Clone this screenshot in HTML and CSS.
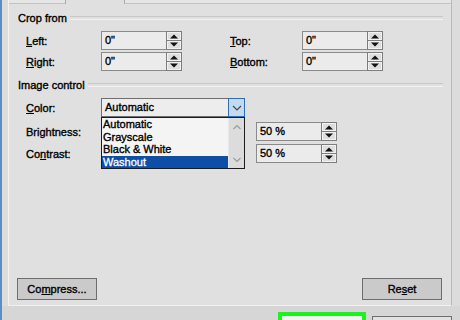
FILE: index.html
```html
<!DOCTYPE html>
<html>
<head>
<meta charset="utf-8">
<link rel="stylesheet" href="styles.css">
</head>
<body>
<div class="window">
  <div class="main">
    <div class="top">
      <div class="panel">
        <div class="tabs">
          <span class="tab-fill"></span>
          <span class="tab"></span>
          <span class="tab-fill grow"></span>
        </div>
        <div class="body">
          <div class="heading"><span>Crop from</span></div>
          <div class="row first">
            <span class="label"><u>L</u>eft:</span>
            <div class="spin"><span class="field">0"</span><svg class="arrows" width="16" height="19" viewBox="0 0 16 19"><rect x="0.5" y="0.5" width="15" height="18" fill="#cfcfcf" stroke="#7d7d7d"/><rect x="1.5" y="1.5" width="13" height="7" fill="#dedede" stroke="#f2f2f2"/><rect x="1.5" y="10.5" width="13" height="7" fill="#dedede" stroke="#f2f2f2"/><line x1="1" y1="9.5" x2="15" y2="9.5" stroke="#7d7d7d"/><path d="M4 7.5h8l-4-4z" fill="#111"/><path d="M4 11.5h8l-4 4z" fill="#111"/></svg></div>
            <span class="gap"></span>
            <span class="label narrow"><u>T</u>op:</span>
            <div class="spin"><span class="field">0"</span><svg class="arrows" width="16" height="19" viewBox="0 0 16 19"><rect x="0.5" y="0.5" width="15" height="18" fill="#cfcfcf" stroke="#7d7d7d"/><rect x="1.5" y="1.5" width="13" height="7" fill="#dedede" stroke="#f2f2f2"/><rect x="1.5" y="10.5" width="13" height="7" fill="#dedede" stroke="#f2f2f2"/><line x1="1" y1="9.5" x2="15" y2="9.5" stroke="#7d7d7d"/><path d="M4 7.5h8l-4-4z" fill="#111"/><path d="M4 11.5h8l-4 4z" fill="#111"/></svg></div>
          </div>
          <div class="row second">
            <span class="label"><u>R</u>ight:</span>
            <div class="spin"><span class="field">0"</span><svg class="arrows" width="16" height="19" viewBox="0 0 16 19"><rect x="0.5" y="0.5" width="15" height="18" fill="#cfcfcf" stroke="#7d7d7d"/><rect x="1.5" y="1.5" width="13" height="7" fill="#dedede" stroke="#f2f2f2"/><rect x="1.5" y="10.5" width="13" height="7" fill="#dedede" stroke="#f2f2f2"/><line x1="1" y1="9.5" x2="15" y2="9.5" stroke="#7d7d7d"/><path d="M4 7.5h8l-4-4z" fill="#111"/><path d="M4 11.5h8l-4 4z" fill="#111"/></svg></div>
            <span class="gap"></span>
            <span class="label narrow"><u>B</u>ottom:</span>
            <div class="spin"><span class="field">0"</span><svg class="arrows" width="16" height="19" viewBox="0 0 16 19"><rect x="0.5" y="0.5" width="15" height="18" fill="#cfcfcf" stroke="#7d7d7d"/><rect x="1.5" y="1.5" width="13" height="7" fill="#dedede" stroke="#f2f2f2"/><rect x="1.5" y="10.5" width="13" height="7" fill="#dedede" stroke="#f2f2f2"/><line x1="1" y1="9.5" x2="15" y2="9.5" stroke="#7d7d7d"/><path d="M4 7.5h8l-4-4z" fill="#111"/><path d="M4 11.5h8l-4 4z" fill="#111"/></svg></div>
          </div>

          <div class="heading second-heading"><span>Image control</span></div>
          <div class="row color-row">
            <span class="label"><u>C</u>olor:</span>
            <div class="select">
              <span class="select-value">Automatic</span>
              <span class="select-btn"><svg width="10" height="6" viewBox="0 0 10 6"><path d="M1 1l4 4 4-4" fill="none" stroke="#3a4a5c" stroke-width="1.2"/></svg></span>
              <div class="list">
                <div class="items">
                  <div class="item">Automatic</div>
                  <div class="item">Grayscale</div>
                  <div class="item">Black &amp; White</div>
                  <div class="item selected">Washout</div>
                </div>
                <div class="scrollbar">
                  <svg width="10" height="6" viewBox="0 0 10 6"><path d="M1.5 5l3.5-3.5 3.5 3.5" fill="none" stroke="#9a9a9a" stroke-width="1.1"/></svg>
                  <svg width="10" height="6" viewBox="0 0 10 6"><path d="M1.5 1l3.5 3.5 3.5-3.5" fill="none" stroke="#9a9a9a" stroke-width="1.1"/></svg>
                </div>
              </div>
            </div>
          </div>
          <div class="row bright-row">
            <span class="label">Bri<u>g</u>htness:</span>
            <span class="slider-space"></span>
            <div class="spin"><span class="field">50 %</span><svg class="arrows" width="16" height="19" viewBox="0 0 16 19"><rect x="0.5" y="0.5" width="15" height="18" fill="#cfcfcf" stroke="#7d7d7d"/><rect x="1.5" y="1.5" width="13" height="7" fill="#dedede" stroke="#f2f2f2"/><rect x="1.5" y="10.5" width="13" height="7" fill="#dedede" stroke="#f2f2f2"/><line x1="1" y1="9.5" x2="15" y2="9.5" stroke="#7d7d7d"/><path d="M4 7.5h8l-4-4z" fill="#111"/><path d="M4 11.5h8l-4 4z" fill="#111"/></svg></div>
          </div>
          <div class="row contrast-row">
            <span class="label">Co<u>n</u>trast:</span>
            <span class="slider-space"></span>
            <div class="spin"><span class="field">50 %</span><svg class="arrows" width="16" height="19" viewBox="0 0 16 19"><rect x="0.5" y="0.5" width="15" height="18" fill="#cfcfcf" stroke="#7d7d7d"/><rect x="1.5" y="1.5" width="13" height="7" fill="#dedede" stroke="#f2f2f2"/><rect x="1.5" y="10.5" width="13" height="7" fill="#dedede" stroke="#f2f2f2"/><line x1="1" y1="9.5" x2="15" y2="9.5" stroke="#7d7d7d"/><path d="M4 7.5h8l-4-4z" fill="#111"/><path d="M4 11.5h8l-4 4z" fill="#111"/></svg></div>
          </div>

          <div class="buttons">
            <button class="btn">Co<u>m</u>press...</button>
            <button class="btn">Re<u>s</u>et</button>
          </div>
        </div>
      </div>
    </div>
    <div class="footer">
      <span class="ok-btn"></span>
      <span class="cancel-btn"></span>
    </div>
  </div>
</div>
</body>
</html>
```

FILE: styles.css
```css
* { box-sizing: border-box; }
html, body { margin: 0; padding: 0; }
body {
  width: 460px;
  height: 320px;
  overflow: hidden;
  font-family: "Liberation Sans", Arial, sans-serif;
  font-size: 11px;
  color: #000;
  -webkit-text-stroke: 0.35px #000;
}
.window {
  width: 460px;
  height: 320px;
  display: flex;
  border-left: 2px solid #5b8ec4;
  background: #dadada;
}
.main {
  flex: 1;
  display: flex;
  flex-direction: column;
}
.top {
  height: 306px;
  display: flex;
  padding-left: 6px;
  background: #dcdcdc;
}
.panel {
  width: 444px;
  height: 306px;
  display: flex;
  flex-direction: column;
  background: #e0e0e0;
  border-left: 1px solid #f3f3f3;
  border-right: 1px solid #b9b9b9;
  border-bottom: 1px solid #f0f0f0;
}
.tabs {
  height: 4px;
  display: flex;
  flex-shrink: 0;
}
.tab-fill {
  width: 56px;
  border-bottom: 1px solid #c2c2c2;
  background: #e6e6e6;
}
.tab-fill.grow { flex: 1; width: auto; }
.tab {
  width: 60px;
  border-left: 1px solid #a9a9a9;
  border-right: 1px solid #a9a9a9;
}
.body {
  flex: 1;
  display: flex;
  flex-direction: column;
  padding: 0 8px 0 9px;
}
.heading {
  display: flex;
  align-items: center;
  height: 14px;
  margin-top: 7px;
  gap: 3px;
}
.heading::after {
  content: "";
  flex: 1;
  height: 2px;
  border-top: 1px solid #c8c8c8;
  border-bottom: 1px solid #f2f2f2;
}
.second-heading { margin-top: 7px; }
.row {
  display: flex;
  align-items: center;
  height: 19px;
  margin-left: 8px;
}
.row.first { margin-top: 6px; }
.row.second { margin-top: 2px; }
.row.color-row { margin-top: 6px; }
.row.bright-row { margin-top: 5px; }
.row.contrast-row { margin-top: 3px; }
.label { width: 75px; flex-shrink: 0; }
.label.narrow { width: 72px; }
.gap { width: 48px; flex-shrink: 0; }
.slider-space { width: 155px; flex-shrink: 0; }
.spin {
  display: flex;
  width: 81px;
  height: 19px;
  flex-shrink: 0;
}
.field {
  flex: 1;
  height: 19px;
  line-height: 17px;
  padding-left: 3px;
  background: #ebebeb;
  border: 1px solid #8a8a8a;
  border-right: none;
}
.arrows { display: block; flex-shrink: 0; }
.select {
  position: relative;
  width: 144px;
  height: 19px;
  display: flex;
  border: 1px solid #6f6f6f;
  background: #ededed;
}
.select-value {
  flex: 1;
  line-height: 17px;
  padding-left: 3px;
}
.select-btn {
  width: 17px;
  margin: -1px -1px -1px 0;
  display: flex;
  align-items: center;
  justify-content: center;
  background: #c4daf0;
  border: 1px solid #2f6fb0;
}
.list {
  position: absolute;
  left: -1px;
  top: 18px;
  width: 144px;
  height: 52px;
  display: flex;
  background: #f4f4f4;
  border: 1px solid #1c1c1c;
  z-index: 2;
}
.items {
  flex: 1;
}
.item {
  height: 12.5px;
  line-height: 12.5px;
  padding-left: 1px;
}
.item.selected {
  background: #0d4ea6;
  color: #fff;
  -webkit-text-stroke: 0.3px #fff;
}
.scrollbar {
  width: 16px;
  display: flex;
  flex-direction: column;
  align-items: center;
  justify-content: space-between;
  padding: 6px 0 5px;
  background: #dcdcdc;
  border-left: 1px solid #e8e8e8;
}
.buttons {
  margin-top: auto;
  margin-bottom: 5px;
  margin-left: -1px;
  margin-right: 1px;
  display: flex;
  justify-content: space-between;
}
.btn {
  width: 80px;
  height: 22px;
  padding: 0;
  font-family: "Liberation Sans", Arial, sans-serif;
  font-size: 11px;
  color: #000;
  -webkit-text-stroke: 0.35px #000;
  background: #cacaca;
  border: 1px solid #6e6e6e;
  border-radius: 0;
}
.footer {
  flex: 1;
  display: flex;
  align-items: flex-start;
  padding-left: 276px;
  background: #d6d6d6;
}
.ok-btn {
  width: 88px;
  height: 14px;
  margin-top: 6px;
  border: 4px solid #19f51c;
  border-bottom: none;
  background: #f4f4f4;
}
.cancel-btn {
  width: 80px;
  height: 10px;
  margin-top: 10px;
  margin-left: 6px;
  border: 1px solid #6e6e6e;
  border-bottom: none;
  background: #e2e2e2;
}
```
